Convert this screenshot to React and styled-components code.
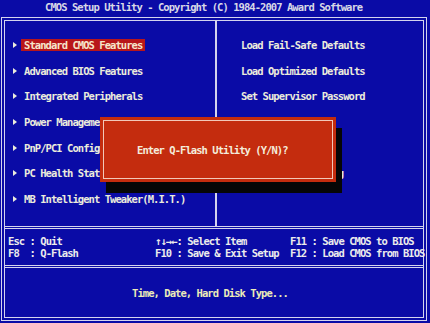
import React from "react";
import styled, { createGlobalStyle } from "styled-components";

const Global = createGlobalStyle`
  html, body { margin: 0; padding: 0; background: #0a0ba6; }
  body { width: 430px; height: 323px; overflow: hidden; }
`;

const Screen = styled.div`
  position: relative;
  width: 430px;
  height: 323px;
  background: #0a0ba6;
  font-family: "DejaVu Sans Mono", "Liberation Mono", monospace;
  font-weight: bold;
  font-size: 10.5px;
  letter-spacing: -0.946px;
  color: #ececdc;
  display: flex;
  flex-direction: column;
  white-space: pre;
`;

const Title = styled.div`
  height: 17px;
  line-height: 15px;
  padding-left: 45px;
  color: #d8d8e6;
`;

const Frame = styled.div`
  margin: 0 3px 0 1px;
  height: 304px;
  box-sizing: border-box;
  border: 4px double #d4d4ee;
  display: flex;
  flex-direction: column;
`;

const Menu = styled.div`
  height: 208px;
  box-sizing: border-box;
  border-bottom: 3px double #d4d4ee;
  display: flex;
`;

const Column = styled.div`
  box-sizing: border-box;
  padding-top: 11px;
  display: grid;
  grid-auto-rows: 25.7px;
  align-content: start;
  width: ${(p) => p.$w};
  padding-left: ${(p) => p.$pad};
  border-right: ${(p) => (p.$divider ? "2px solid #d4d4ee" : "none")};
`;

const Item = styled.div`
  display: flex;
  align-items: center;
  line-height: 12px;
`;

const Arrow = styled.span`
  width: 0;
  height: 0;
  border-left: 4px solid #ececdc;
  border-top: 3.5px solid transparent;
  border-bottom: 3.5px solid transparent;
  margin-right: 4px;
`;

const Label = styled.span`
  padding: 0 3px;
  background: ${(p) => (p.$active ? "#b8161a" : "transparent")};
  color: ${(p) => (p.$active ? "#f6e6cc" : "#ececdc")};
`;

const Help = styled.div`
  height: 39px;
  box-sizing: border-box;
  border-bottom: 3px double #d4d4ee;
  display: grid;
  grid-template-columns: 147px 135px 1fr;
  align-content: center;
  padding-left: 3px;
  line-height: 12px;
  color: #ececec;
`;

const Status = styled.div`
  flex: 1;
  display: flex;
  align-items: center;
  justify-content: center;
  padding-right: 8px;
  color: #ecebb8;
`;

const Dialog = styled.div`
  position: absolute;
  left: 100px;
  top: 117px;
  width: 236px;
  height: 65px;
  box-sizing: border-box;
  background: #c42c0e;
  box-shadow: 6px 11px 0 #060606;
  padding: 3px;
`;

const DialogInner = styled.div`
  height: 100%;
  box-sizing: border-box;
  border: 1px solid #f2c8b8;
  display: flex;
  align-items: center;
  padding-left: 33px;
  color: #f4ecdc;
  line-height: 12px;
`;

const left = [
  "Standard CMOS Features",
  "Advanced BIOS Features",
  "Integrated Peripherals",
  "Power Management Setup",
  "PnP/PCI Configurations",
  "PC Health Status",
  "MB Intelligent Tweaker(M.I.T.)",
];

const right = [
  "Load Fail-Safe Defaults",
  "Load Optimized Defaults",
  "Set Supervisor Password",
  "Set User Password",
  "Save & Exit Setup",
  "Exit Without Saving",
];

export default function App() {
  return (
    <>
      <Global />
      <Screen>
        <Title>CMOS Setup Utility - Copyright (C) 1984-2007 Award Software</Title>
        <Frame>
          <Menu>
            <Column $w="212px" $pad="8px" $divider>
              {left.map((t, i) => (
                <Item key={t}>
                  <Arrow />
                  <Label $active={i === 0}>{t}</Label>
                </Item>
              ))}
            </Column>
            <Column $w="auto" $pad="24px">
              {right.map((t) => (
                <Item key={t}>{t}</Item>
              ))}
            </Column>
          </Menu>
          <Help>
            <span>Esc : Quit</span>
            <span>↑↓→←: Select Item</span>
            <span>F11 : Save CMOS to BIOS</span>
            <span>F8  : Q-Flash</span>
            <span>F10 : Save &amp; Exit Setup</span>
            <span>F12 : Load CMOS from BIOS</span>
          </Help>
          <Status>Time, Date, Hard Disk Type...</Status>
        </Frame>
        <Dialog>
          <DialogInner>Enter Q-Flash Utility (Y/N)?</DialogInner>
        </Dialog>
      </Screen>
    </>
  );
}
